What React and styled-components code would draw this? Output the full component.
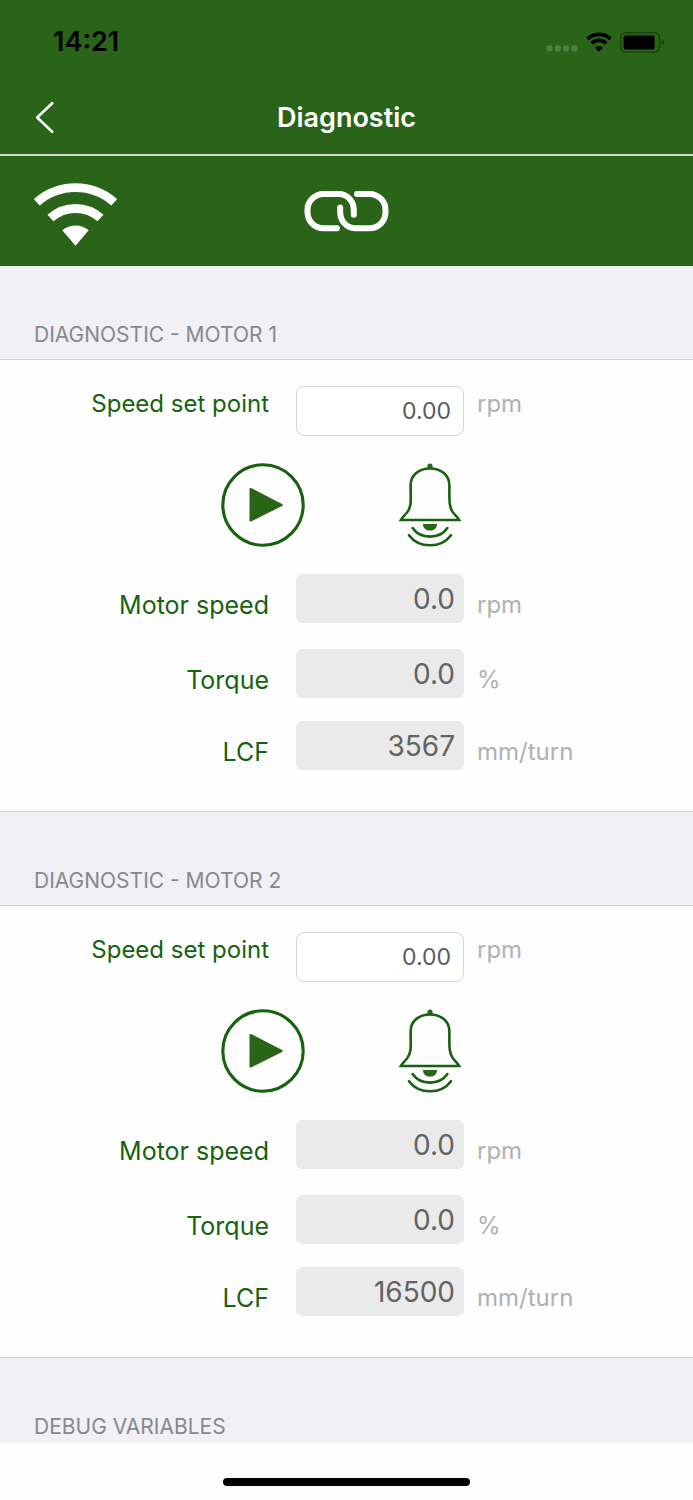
import React, { useId, useState } from "react";
import styled, { createGlobalStyle } from "styled-components";

const green = "#2a6418";
const ink = "#17620f";

const GlobalStyle = createGlobalStyle`
  *, *::before, *::after { box-sizing: border-box; }
  body {
    margin: 0;
    background: #fefefe;
    font-family: Inter, "Liberation Sans", sans-serif;
    -webkit-font-smoothing: antialiased;
  }
`;

const Screen = styled.div`
  display: flex;
  flex-direction: column;
  min-height: 100vh;
`;

const StatusBar = styled.div`
  display: flex;
  align-items: center;
  justify-content: space-between;
  height: 82px;
  padding: 2px 28px 0 53px;
  background: ${green};
  color: #000;
`;

const Clock = styled.time`
  font-size: 27px;
  line-height: 32px;
  font-weight: 600;
`;

const StatusIcons = styled.div`
  display: flex;
  align-items: center;
  gap: 8px;
`;

const NavBar = styled.header`
  display: grid;
  grid-template-columns: 1fr auto 1fr;
  align-items: center;
  height: 74px;
  padding: 0 34px;
  background: ${green};
  border-bottom: 2px solid #d3dccf;
`;

const Title = styled.h1`
  margin: 0;
  color: #fff;
  font-size: 27px;
  line-height: 36px;
  font-weight: 600;
`;

const IconButton = styled.button`
  display: block;
  justify-self: start;
  margin: 0;
  padding: 0;
  border: 0;
  background: none;
  color: #fff;
  cursor: pointer;

  svg { display: block; }
`;

const Connection = styled.div`
  display: grid;
  grid-template-columns: 1fr auto 1fr;
  align-items: center;
  height: 110px;
  padding: 0 34px;
  background: ${green};
  color: #fff;

  svg { display: block; }
`;

const Main = styled.main`
  flex: 1;
`;

const SectionTitle = styled.h2`
  margin: 0;
  padding: 55px 34px ${(p) => (p.$last ? 2 : 10)}px;
  background: #f0f0f6;
  color: #88888d;
  font-size: 21px;
  line-height: 28px;
  font-weight: 400;
  text-transform: uppercase;
`;

const Panel = styled.form`
  padding: 26px 0 41px;
  border: solid #cfcfd3;
  border-width: 1px 0;
`;

const Row = styled.div`
  display: grid;
  grid-template-columns: minmax(0, 296fr) 168px minmax(0, 229fr);
  align-items: ${(p) => p.$align || "end"};
  margin-top: ${(p) => p.$space || 0}px;
`;

const Label = styled.label`
  padding-right: 27px;
  color: ${ink};
  font-size: ${(p) => (p.$small ? 24 : 25)}px;
  line-height: 36px;
  text-align: right;
`;

const Unit = styled.span`
  padding-left: 13px;
  color: #b1b1b1;
  font-size: 24px;
  line-height: 36px;
`;

const Field = styled.input`
  width: 100%;
  height: 50px;
  margin: 0;
  padding: 0 12px;
  border: 1px solid #d5d5d5;
  border-radius: 8px;
  background: #fff;
  color: #5a5a5c;
  font: 400 23px Inter, "Liberation Sans", sans-serif;
  text-align: right;
`;

const Reading = styled(Field)`
  height: 49px;
  padding: 0 9px;
  border: 0;
  border-radius: 6px;
  background: #eaeaea;
  color: #636363;
  font-size: 28px;
`;

const Actions = styled.div`
  display: flex;
  justify-content: center;
  gap: 83px;
  margin: 27px 0;
`;

const HomeArea = styled.footer`
  display: flex;
  justify-content: center;
  height: 57px;
  padding-top: 35px;
`;

const HomeIndicator = styled.div`
  width: 247px;
  height: 8px;
  border-radius: 4px;
  background: #000;
`;

const SignalDots = () => (
  <svg width="32" height="20" viewBox="0 0 32 20" fill="#4c8240" aria-hidden="true">
    {[0, 1, 2, 3].map((i) => (
      <rect key={i} x={0.5 + i * 8.35} y="13.5" width="6" height="6" rx="2" />
    ))}
  </svg>
);

const SmallWifi = () => (
  <svg width="26" height="20" viewBox="0 0 26 20" fill="none" stroke="currentColor" aria-hidden="true">
    <path d="M1.5 7A16.5 16.5 0 0 1 24.5 7" strokeWidth="3.8" />
    <path d="M5.8 11.4A10.3 10.3 0 0 1 20.2 11.4" strokeWidth="3.7" />
    <path d="M9 15.7A5.8 5.8 0 0 1 17 15.7L13.5 19.2Q13 19.7 12.5 19.2Z" fill="currentColor" stroke="none" />
  </svg>
);

const Battery = () => (
  <svg width="45" height="21" viewBox="0 0 45 21" aria-hidden="true">
    <rect x="0.7" y="0.7" width="38.8" height="19.4" rx="5" fill="none" stroke="#1b4110" strokeWidth="1.4" />
    <rect x="3.6" y="3.6" width="31" height="13.8" rx="2" fill="currentColor" />
    <path d="M41.6 7.2Q43.8 8 43.8 10.4T41.6 13.6Z" fill="#1b4110" />
  </svg>
);

const BackIcon = () => (
  <svg width="22" height="34" viewBox="0 0 22 34" fill="none" stroke="currentColor" strokeWidth="2.6" strokeLinecap="round" strokeLinejoin="round">
    <path d="M18.2 2.2L3.2 16.5L18.2 30.8" />
  </svg>
);

const WifiIcon = () => (
  <svg width="83" height="70" viewBox="0 0 83 70" fill="none" stroke="currentColor" role="img" aria-label="Wi-Fi">
    <path d="M2.8 26.3A58.5 58.5 0 0 1 80.2 26.3" strokeWidth="8.8" />
    <path d="M16.5 42A37.3 37.3 0 0 1 66.5 42" strokeWidth="9" />
    <path d="M28.3 54.3A20.5 20.5 0 0 1 54.7 54.3L41.5 69.7Z" fill="currentColor" stroke="none" />
  </svg>
);

const LinkIcon = () => (
  <svg width="85" height="42" viewBox="0 0 85 42" fill="none" stroke="currentColor" strokeWidth="6" strokeLinecap="round" role="img" aria-label="Linked">
    <path d="M33 38.2H19.5A16 16 0 0 1 3.5 22.2V20A16 16 0 0 1 19.5 4H35A14.8 16 0 0 1 49.8 20V24.8" />
    <path d="M53 4H65.5A16 16 0 0 1 81.5 20V22.2A16 16 0 0 1 65.5 38.2H51A14.8 16 0 0 1 36.2 22.2V17.4" />
  </svg>
);

const PlayIcon = () => (
  <svg width="84" height="84" viewBox="0 0 84 84">
    <circle cx="42" cy="42" r="40.2" fill="none" stroke={ink} strokeWidth="3.1" />
    <path d="M29.6 26L60.6 42L29.6 57.4Z" fill={green} stroke={green} strokeWidth="2.2" strokeLinejoin="round" />
  </svg>
);

const BellIcon = () => (
  <svg width="84" height="84" viewBox="0 0 84 84" fill="none" stroke={ink} strokeWidth="2.6" strokeLinecap="round">
    <path d="M39.4 5V3A2.6 2.6 0 0 1 44.6 3V5Z" fill={green} stroke="none" />
    <path d="M12.8 57C14 54.5 16.5 52.5 19 49.5C24 43.8 22.6 35 22.6 22.5C22.6 12 31 5.5 42 5.5S61.4 12 61.4 22.5C61.4 35 60.6 43.8 65 49.5C67.5 52.5 70 54.5 71.2 57Z" strokeLinejoin="miter" />
    <path d="M35 61H49C49 65 46.5 67.6 42 67.6S35 65 35 61Z" fill={green} stroke="none" />
    <path d="M24.6 65C32.5 76.5 51.5 76.5 59.4 65" />
    <path d="M21 72.2C31 85.6 53 85.6 63 72.2" />
  </svg>
);

function Measurement({ label, value, unit, space }) {
  const id = useId();
  return (
    <Row $space={space}>
      <Label htmlFor={id}>{label}</Label>
      <Reading id={id} value={value} readOnly />
      <Unit>{unit}</Unit>
    </Row>
  );
}

function Motor({ number, lcf }) {
  const id = useId();
  const [setPoint, setSetPoint] = useState("0.00");
  return (
    <section>
      <SectionTitle>Diagnostic - Motor {number}</SectionTitle>
      <Panel onSubmit={(e) => e.preventDefault()}>
        <Row $align="start">
          <Label $small htmlFor={id}>Speed set point</Label>
          <Field id={id} inputMode="decimal" value={setPoint} onChange={(e) => setSetPoint(e.target.value)} />
          <Unit>rpm</Unit>
        </Row>
        <Actions>
          <IconButton type="button" aria-label="Start motor"><PlayIcon /></IconButton>
          <IconButton type="button" aria-label="Sound alarm"><BellIcon /></IconButton>
        </Actions>
        <Measurement label="Motor speed" value="0.0" unit="rpm" />
        <Measurement label="Torque" value="0.0" unit="%" space={26} />
        <Measurement label="LCF" value={lcf} unit="mm/turn" space={23} />
      </Panel>
    </section>
  );
}

export default function App() {
  return (
    <>
      <GlobalStyle />
      <Screen>
        <StatusBar>
          <Clock>14:21</Clock>
          <StatusIcons>
            <SignalDots />
            <SmallWifi />
            <Battery />
          </StatusIcons>
        </StatusBar>
        <NavBar>
          <IconButton type="button" aria-label="Back"><BackIcon /></IconButton>
          <Title>Diagnostic</Title>
        </NavBar>
        <Connection>
          <WifiIcon />
          <LinkIcon />
        </Connection>
        <Main>
          <Motor number={1} lcf="3567" />
          <Motor number={2} lcf="16500" />
          <SectionTitle $last>Debug variables</SectionTitle>
        </Main>
        <HomeArea>
          <HomeIndicator />
        </HomeArea>
      </Screen>
    </>
  );
}
